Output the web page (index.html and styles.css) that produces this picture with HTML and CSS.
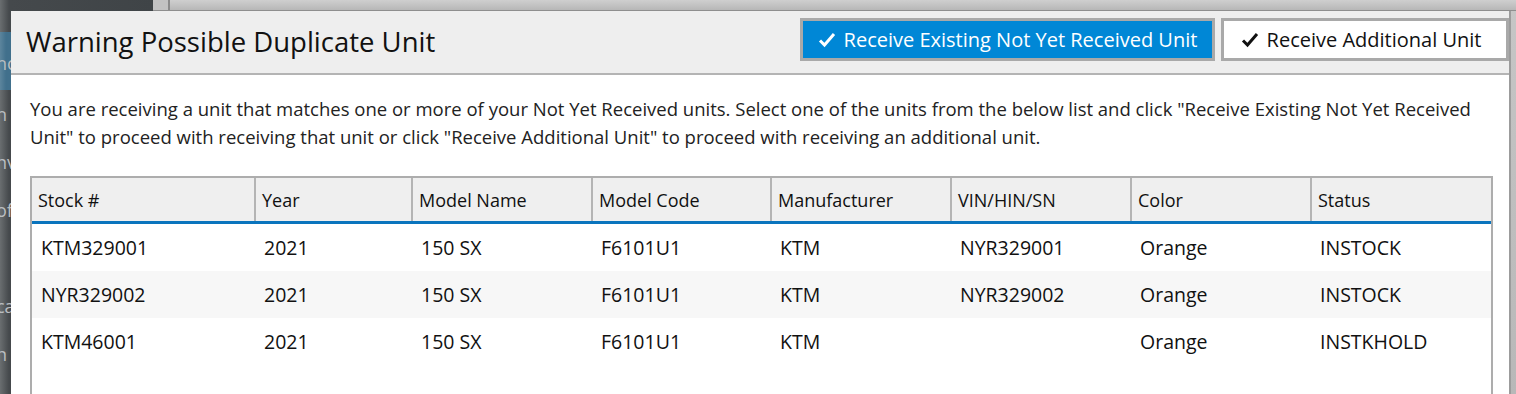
FILE: index.html
```html
<!DOCTYPE html>
<html lang="en">
<head>
<meta charset="UTF-8">
<title>Warning Possible Duplicate Unit</title>
<link rel="stylesheet" href="styles.css">
</head>
<body>

<!-- page behind the dialog -->
<div class="backdrop">
  <div class="sidebar">
    <div class="side-item active">hc</div>
    <div class="side-item">h</div>
    <div class="side-item">nv</div>
    <div class="side-item">of</div>
    <div class="side-item"></div>
    <div class="side-item">ca</div>
    <div class="side-item">n</div>
  </div>
  <div class="main">
    <div class="topbar">
      <span class="tab-light"></span>
    </div>
  </div>
</div>

<!-- dialog -->
<div class="modal">
  <div class="modal-header">
    <h1 class="modal-title">Warning Possible Duplicate Unit</h1>
    <div class="actions">
      <button class="btn btn-primary">
        <svg class="check" width="18" height="16" viewBox="0 0 18 16"><path d="M2 8.5 L6.5 13 L16 2" fill="none" stroke="currentColor" stroke-width="3"/></svg>
        Receive Existing Not Yet Received Unit
      </button>
      <button class="btn btn-default">
        <svg class="check" width="18" height="16" viewBox="0 0 18 16"><path d="M2 8.5 L6.5 13 L16 2" fill="none" stroke="currentColor" stroke-width="3"/></svg>
        Receive Additional Unit
      </button>
    </div>
  </div>

  <div class="modal-body">
    <p class="message">You are receiving a unit that matches one or more of your Not Yet Received units. Select one of the units from the below list and click "Receive Existing Not Yet Received Unit" to proceed with receiving that unit or click "Receive Additional Unit" to proceed with receiving an additional unit.</p>

    <div class="grid">
      <table class="units">
        <colgroup>
          <col class="c-stock">
          <col class="c-year">
          <col class="c-name">
          <col class="c-code">
          <col class="c-make">
          <col class="c-vin">
          <col class="c-color">
          <col class="c-status">
        </colgroup>
        <thead>
          <tr>
            <th>Stock #</th>
            <th>Year</th>
            <th>Model Name</th>
            <th>Model Code</th>
            <th>Manufacturer</th>
            <th>VIN/HIN/SN</th>
            <th>Color</th>
            <th>Status</th>
          </tr>
        </thead>
        <tbody>
          <tr>
            <td>KTM329001</td>
            <td>2021</td>
            <td>150 SX</td>
            <td>F6101U1</td>
            <td>KTM</td>
            <td>NYR329001</td>
            <td>Orange</td>
            <td>INSTOCK</td>
          </tr>
          <tr class="alt">
            <td>NYR329002</td>
            <td>2021</td>
            <td>150 SX</td>
            <td>F6101U1</td>
            <td>KTM</td>
            <td>NYR329002</td>
            <td>Orange</td>
            <td>INSTOCK</td>
          </tr>
          <tr>
            <td>KTM46001</td>
            <td>2021</td>
            <td>150 SX</td>
            <td>F6101U1</td>
            <td>KTM</td>
            <td></td>
            <td>Orange</td>
            <td>INSTKHOLD</td>
          </tr>
        </tbody>
      </table>
    </div>
  </div>
</div>

</body>
</html>
```

FILE: styles.css
```css
html, body {
  margin: 0;
  height: 100%;
  overflow: hidden;
  font-family: 'Open Sans', 'Noto Sans', sans-serif;
}

body {
  position: relative;
  background: #bcbcbc;
}

/* page behind the dialog */
.backdrop {
  display: flex;
  height: 100%;
}

.sidebar {
  width: 153px;
  background: linear-gradient(to right, #6a6e70, #45494c 9px, #3f4447);
  padding-top: 32px;
}

.side-item {
  height: 48px;
  line-height: 48px;
  margin-left: -4px;
  color: #b9bdc0;
  font-size: 18px;
}

.side-item.active {
  height: 58px;
  line-height: 62px;
  background: linear-gradient(to right, #6f93a8, #41708c 10px);
}

.main {
  flex: 1;
  background: linear-gradient(to bottom, #c6c6c6, #b8b8b8);
}

.topbar {
  display: flex;
  height: 10px;
  border-bottom: 1px solid #8e8e8e;
  background: linear-gradient(to bottom, #cfcfcf, #b7b7b7);
}

.tab-light {
  width: 15px;
  background: #c2c2c2;
  border-right: 2px solid #8a8a8a;
}

/* dialog */
.modal {
  position: absolute;
  left: 11px;
  top: 11px;
  right: 5px;
  bottom: 0;
  background: #fff;
  border-right: 2px solid #9c9c9c;
}

.modal-header {
  display: flex;
  align-items: flex-start;
  justify-content: space-between;
  height: 62px;
  background: #eeeeee;
  border-bottom: 2px solid #b4b4b4;
  padding: 0 0 0 15px;
}

.modal-title {
  margin: 0;
  padding-top: 12px;
  font-size: 27.5px;
  font-weight: normal;
  color: #111;
}

.actions {
  display: flex;
  gap: 6px;
  margin-top: 7px;
}

.btn {
  display: flex;
  align-items: center;
  justify-content: center;
  gap: 8px;
  height: 43px;
  border: 3px solid #a9a9a9;
  font-family: inherit;
  font-size: 20px;
  padding: 0;
  cursor: pointer;
}

.btn-primary {
  width: 415px;
  background: #0087d6;
  color: #fff;
}

.btn-default {
  width: 288px;
  background: #fff;
  color: #111;
  padding-right: 8px;
}

.modal-body {
  padding: 20px 0 0 19px;
}

.message {
  margin: 0 20px 25px 0;
  font-size: 18.5px;
  line-height: 28px;
  color: #222;
}

.grid {
  width: 1459px;
  height: 300px;
  border: 2px solid #adadad;
  border-bottom: none;
}

.units {
  border-collapse: collapse;
  table-layout: fixed;
  width: 100%;
}

.c-stock { width: 223px; }
.c-year { width: 157px; }
.c-name { width: 180px; }
.c-code { width: 179px; }
.c-make { width: 180px; }
.c-vin { width: 180px; }
.c-color { width: 180px; }
.c-status { width: 180px; }

.units th {
  height: 43px;
  background: #efefef;
  border-right: 2px solid #b4b4b4;
  border-bottom: 3px solid #0a74bd;
  text-align: left;
  font-weight: normal;
  font-size: 18px;
  color: #111;
  padding: 0 0 0 6px;
}

.units th:last-child {
  border-right: none;
}

.units td {
  height: 47px;
  padding: 0 0 0 9px;
  font-size: 19.5px;
  color: #111;
}

.units tr.alt td {
  background: #f7f7f7;
}
```
